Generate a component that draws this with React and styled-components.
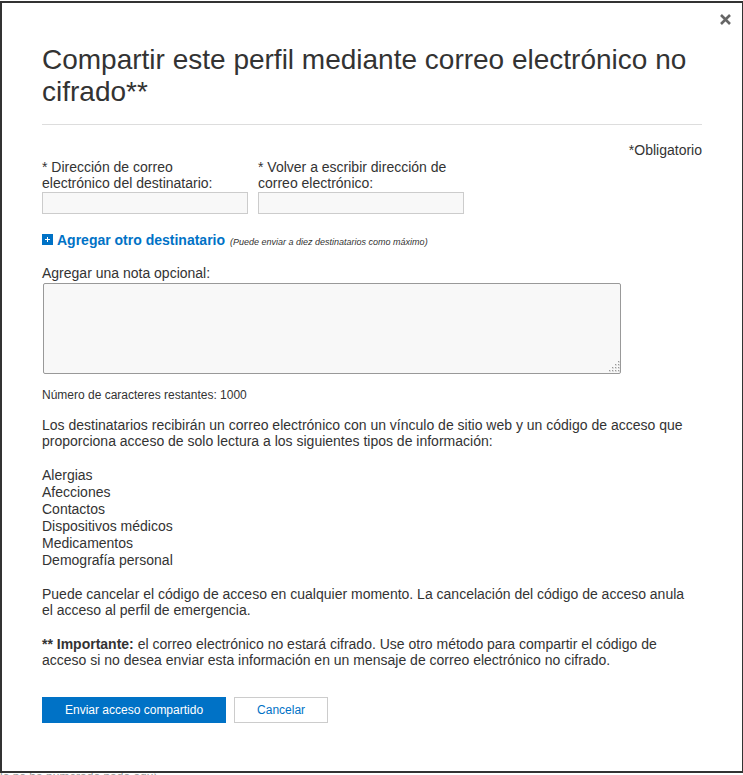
import React from "react";
import styled, { createGlobalStyle } from "styled-components";

const GlobalStyle = createGlobalStyle`
  *, *::before, *::after { box-sizing: border-box; }
  body {
    margin: 0;
    background: #fff;
    color: #333;
    font: 14px/16px "Liberation Sans", Arial, sans-serif;
    overflow: hidden;
  }
`;

const Page = styled.div`
  padding-top: 1px;
`;

const Dialog = styled.section`
  position: relative;
  margin-right: -1px;
  padding: 41px 40px 48px;
  border: 2px solid #333;
  background: #fff;
`;

const CloseButton = styled.button`
  position: absolute;
  top: 10px;
  right: 10px;
  display: flex;
  padding: 1px;
  border: 0;
  background: none;
  color: #666;
  cursor: pointer;
`;

const Title = styled.h1`
  margin: 0 0 17px;
  padding-bottom: 16px;
  border-bottom: 1px solid #ddd;
  font-size: 28px;
  line-height: 32px;
  font-weight: 400;
`;

const Required = styled.p`
  margin: 0 0 1px;
  text-align: right;
`;

const FieldRow = styled.div`
  display: flex;
  gap: 10px;
`;

const Field = styled.div`
  display: flex;
  flex-direction: column;
  gap: 1px;
  width: 206px;
`;

const FieldLabel = styled.label`
  padding-right: 10px;
`;

const TextInput = styled.input`
  width: 100%;
  height: 22px;
  padding: 2px 4px;
  border: 1px solid #ccc;
  border-radius: 0;
  background: #f8f8f8;
  font: inherit;
`;

const AddRow = styled.div`
  display: flex;
  align-items: baseline;
  gap: 5px;
  margin: 18px 0 17px;
`;

const AddLink = styled.a`
  display: flex;
  align-items: baseline;
  gap: 4px;
  color: #0072c6;
  font-weight: 700;
  text-decoration: none;
`;

const Hint = styled.em`
  font-size: 9px;
  line-height: 12px;
`;

const NoteWrap = styled.div`
  position: relative;
`;

const NoteArea = styled.textarea`
  display: block;
  width: calc(100% - 82px);
  height: 91px;
  margin: 2px 1px 13px;
  padding: 2px;
  border: 1px solid #999;
  border-radius: 2px;
  background: #f8f8f8;
  font: inherit;
  resize: none;
`;

const Grip = styled.svg`
  position: absolute;
  right: 82px;
  bottom: 2px;
  pointer-events: none;
`;

const Counter = styled.p`
  margin: 0 0 14px;
  font-size: 12px;
`;

const Paragraph = styled.p`
  margin: 0 0 18px;
  padding-right: 10px;
`;

const InfoList = styled.ul`
  margin: 0 0 17px;
  padding: 0;
  list-style: none;
  line-height: 17px;
`;

const Actions = styled.div`
  display: flex;
  gap: 8px;
  margin-top: 29px;
`;

const Button = styled.button`
  height: 26px;
  padding: 0 22px;
  border: 1px solid ${(p) => (p.$primary ? "#0072c6" : "#ccc")};
  background: ${(p) => (p.$primary ? "#0072c6" : "#fff")};
  color: ${(p) => (p.$primary ? "#fff" : "#0072c6")};
  font: 12px/16px "Liberation Sans", Arial, sans-serif;
  cursor: pointer;
`;

const Behind = styled.p`
  margin: -4px 0 0;
  color: #999;
  font-size: 12px;
`;

const INFO = [
  "Alergias",
  "Afecciones",
  "Contactos",
  "Dispositivos médicos",
  "Medicamentos",
  "Demografía personal",
];

const GRIP_DOTS = [[9, 0], [6, 3], [9, 3], [3, 6], [6, 6], [9, 6], [0, 9], [3, 9], [6, 9], [9, 9]];

export default function App() {
  return (
    <Page>
      <GlobalStyle />
      <Dialog role="dialog" aria-labelledby="share-title">
        <CloseButton type="button" aria-label="Cerrar">
          <svg width="11" height="11" viewBox="0 0 11 11" aria-hidden="true">
            <path d="M1 1L10 10M10 1L1 10" stroke="currentColor" strokeWidth="2.6" />
          </svg>
        </CloseButton>
        <Title id="share-title">
          Compartir este perfil mediante correo electrónico no cifrado**
        </Title>
        <Required>*Obligatorio</Required>
        <FieldRow>
          <Field>
            <FieldLabel htmlFor="email">* Dirección de correo electrónico del destinatario:</FieldLabel>
            <TextInput id="email" type="email" required />
          </Field>
          <Field>
            <FieldLabel htmlFor="email-again">* Volver a escribir dirección de correo electrónico:</FieldLabel>
            <TextInput id="email-again" type="email" required />
          </Field>
        </FieldRow>
        <AddRow>
          <AddLink href="#agregar">
            <svg width="11" height="11" viewBox="0 0 11 11" shapeRendering="crispEdges" aria-hidden="true">
              <rect width="11" height="11" fill="#0072c6" />
              <path d="M3 5h5v1H3zM5 3h1v5H5z" fill="#fff" />
            </svg>
            Agregar otro destinatario
          </AddLink>
          <Hint>(Puede enviar a diez destinatarios como máximo)</Hint>
        </AddRow>
        <label htmlFor="note">Agregar una nota opcional:</label>
        <NoteWrap>
          <NoteArea id="note" maxLength={1000} />
          <Grip width="11" height="11" viewBox="0 0 11 11" shapeRendering="crispEdges" aria-hidden="true">
            {GRIP_DOTS.map(([x, y]) => (
              <g key={`${x}-${y}`}>
                <rect x={x} y={y} width="2" height="2" fill="#ddd" />
                <rect x={x} y={y} width="1" height="1" fill="#999" />
              </g>
            ))}
          </Grip>
        </NoteWrap>
        <Counter>Número de caracteres restantes: 1000</Counter>
        <Paragraph>
          Los destinatarios recibirán un correo electrónico con un vínculo de sitio web y un código de
          acceso que proporciona acceso de solo lectura a los siguientes tipos de información:
        </Paragraph>
        <InfoList>
          {INFO.map((item) => (
            <li key={item}>{item}</li>
          ))}
        </InfoList>
        <Paragraph>
          Puede cancelar el código de acceso en cualquier momento. La cancelación del código de acceso
          anula el acceso al perfil de emergencia.
        </Paragraph>
        <Paragraph>
          <strong>** Importante:</strong> el correo electrónico no estará cifrado. Use otro método para
          compartir el código de acceso si no desea enviar esta información en un mensaje de correo
          electrónico no cifrado.
        </Paragraph>
        <Actions>
          <Button type="submit" $primary>Enviar acceso compartido</Button>
          <Button type="button">Cancelar</Button>
        </Actions>
      </Dialog>
      <Behind>lo no ha numerado nada aquí</Behind>
    </Page>
  );
}
